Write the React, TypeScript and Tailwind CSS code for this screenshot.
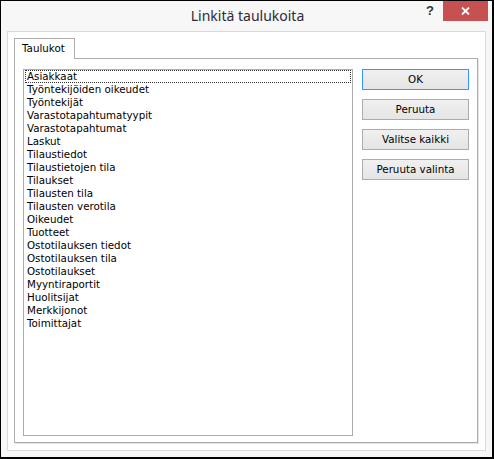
import React from "react";

const items = [
  "Asiakkaat",
  "Työntekijöiden oikeudet",
  "Työntekijät",
  "Varastotapahtumatyypit",
  "Varastotapahtumat",
  "Laskut",
  "Tilaustiedot",
  "Tilaustietojen tila",
  "Tilaukset",
  "Tilausten tila",
  "Tilausten verotila",
  "Oikeudet",
  "Tuotteet",
  "Ostotilauksen tiedot",
  "Ostotilauksen tila",
  "Ostotilaukset",
  "Myyntiraportit",
  "Huolitsijat",
  "Merkkijonot",
  "Toimittajat",
];

const buttons = ["OK", "Peruuta", "Valitse kaikki", "Peruuta valinta"];

export default function App() {
  return (
    <div className="w-[494px] h-[459px] bg-[#f7f7f7] border-l border-t border-r-2 border-b-2 border-black flex flex-col font-['DejaVu_Sans',sans-serif] text-[10.3px] text-black">
      {/* Title bar */}
      <div className="h-[30px] flex items-start relative">
        <div className="flex-1 flex justify-center pt-[5px] pl-[2px]">
          <span className="font-['Noto_Sans',sans-serif] text-[14px] leading-[20px] text-[#2b2b3a]">
            Linkitä taulukoita
          </span>
        </div>
        <div className="absolute right-[4px] top-0 flex items-start">
          <span className="font-['Liberation_Sans',sans-serif] font-bold text-[13px] leading-[18px] text-[#333] mr-[9px] mt-[1px]">?</span>
          <div className="w-[45px] h-[20px] bg-[#c75050] flex items-center justify-center">
            <svg width="9" height="8" viewBox="0 0 9 8">
              <path d="M1 0.5 L8 7.5 M8 0.5 L1 7.5" stroke="#fff" strokeWidth="1.8" />
            </svg>
          </div>
        </div>
      </div>
      {/* Inner frame */}
      <div className="flex-1 ml-[6px] mr-[6px] mb-[6px] border border-[#dadada] bg-white flex flex-col pt-[6px] pl-[6px] pr-[6px] pb-[7px]">
        {/* Tab row */}
        <div className="flex h-[20px]">
          <div className="w-[61px] h-[21px] border border-b-0 border-[#acacac] bg-white relative z-10 flex items-center pl-[7px]">
            Taulukot
          </div>
        </div>
        {/* Panel */}
        <div className="flex-1 mr-[1px] border border-[#acacac] bg-white shadow-[1px_1px_0_#e3e3e3] flex pt-[10px] pl-[8px] pr-[8px] pb-[6px] gap-[9px]">
          <div className="w-[330px] border border-[#acacac] bg-white p-[1px] pt-[0px]">
            {items.map((it, i) => (
              <div
                key={it}
                className={
                  "h-[13px] leading-[13px] pl-[2px] whitespace-nowrap " +
                  (i === 0 ? "outline-1 outline-dotted outline-[#333] -outline-offset-1" : "")
                }
              >
                {it}
              </div>
            ))}
          </div>
          <div className="flex flex-col gap-[9px]">
            {buttons.map((b, i) => (
              <div
                key={b}
                className={
                  "w-[107px] h-[21px] flex items-center justify-center bg-gradient-to-b from-[#f0f0f0] to-[#e5e5e5] border " +
                  (i === 0 ? "border-[#3399ff]" : "border-[#acacac]")
                }
              >
                {b}
              </div>
            ))}
          </div>
        </div>
      </div>
    </div>
  );
}
